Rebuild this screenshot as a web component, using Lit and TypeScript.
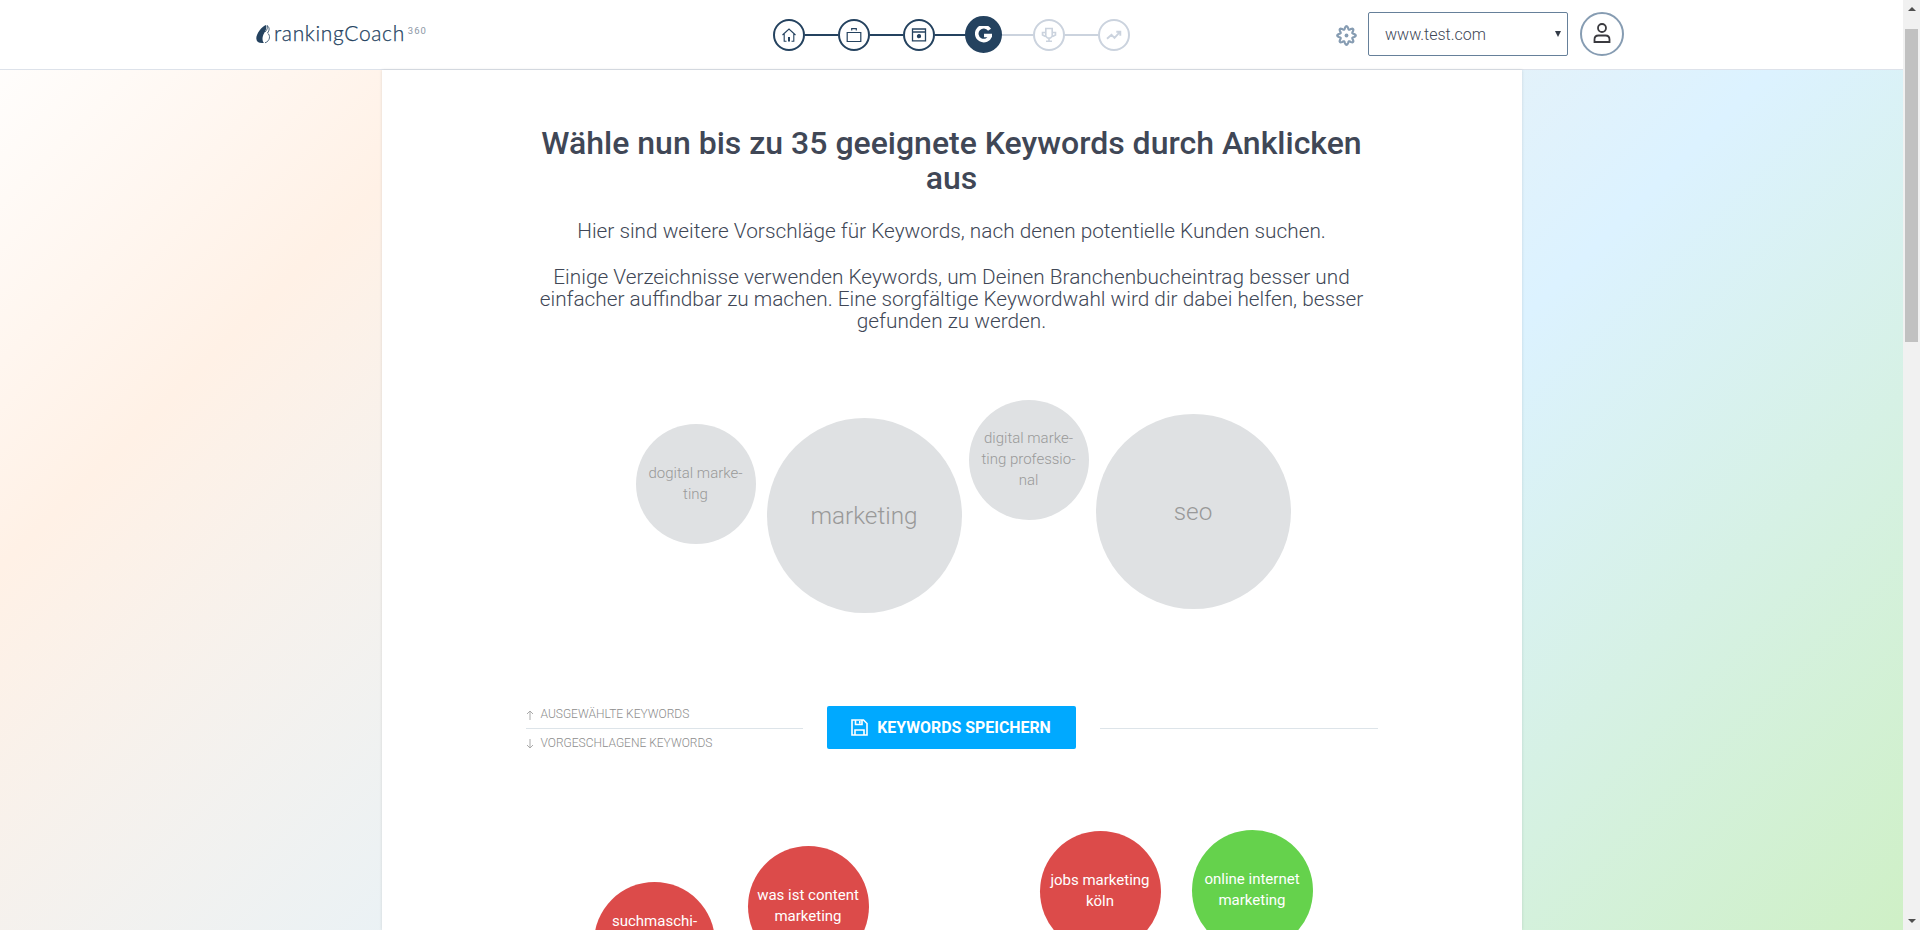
import { LitElement, html, css, svg } from "lit";
import { customElement } from "lit/decorators.js";

interface Bubble { text: string[]; x: number; y: number; d: number; kind: string; }

const selected: Bubble[] = [
  { text: ["dogital marke-", "ting"], x: 110, y: 24, d: 120, kind: "grey" },
  { text: ["marketing"], x: 241, y: 18, d: 195, kind: "grey big" },
  { text: ["digital marke-", "ting professio-", "nal"], x: 443, y: 0, d: 120, kind: "grey raised" },
  { text: ["seo"], x: 570, y: 14, d: 195, kind: "grey big" },
];
const suggested: Bubble[] = [
  { text: ["suchmaschi-", "", ""], x: 68.5, y: 52, d: 121, kind: "red" },
  { text: ["was ist content", "marketing"], x: 222, y: 16, d: 121, kind: "red raised" },
  { text: ["jobs marketing", "köln"], x: 514, y: 1, d: 121, kind: "red raised" },
  { text: ["online internet", "marketing"], x: 666, y: 0, d: 121, kind: "green raised" },
];

const icons = {
  home: svg`<path d="M1.500 8 8 2l6.500 6M3.200 7v7.300h2.300M12.800 7v7.300h-2.300"/><path d="M8 10v4.500" stroke-width="2"/>`,
  bag: svg`<path d="M1.200 5.500h13.600v9H1.200zM5.700 3.500V1.700h4.600v1.800" stroke-width="1.200"/>`,
  card: svg`<path d="M1.500 2h13v11.800h-13zM1.500 5h13" stroke-width="1.300"/><circle cx="8" cy="9.200" r="1.600" fill="currentColor"/>`,
  g: svg`<path d="M13.700 3.500A6.600 6.600 0 1 0 14.600 8.900H8.500" stroke-width="3.400"/>`,
  cup: svg`<path d="M4.800 1.500h6.400v7.700L9.500 11h-3L4.800 9.200zM4.500 5.500h-3V8l3 1.500M11.500 5.500h3V8l-3 1.500M8 11v3M5 14.300h6" stroke-width="1.600"/>`,
  trend: svg`<path d="M1 11.800 5.500 7.800l3 3 5.500-6M10.300 4.800h4v4" stroke-width="1.900"/>`,
};

/** Closed outline of a gear with eight rounded teeth, centred on (10, 10). */
function gearOutline(): string {
  const points: string[] = [];
  for (let i = 0; i < 96; i++) {
    const a = (i / 96) * Math.PI * 2;
    const r = 7.4 + 1.4 * Math.cos(8 * a);
    points.push(`${(10 + r * Math.sin(a)).toFixed(2)} ${(10 - r * Math.cos(a)).toFixed(2)}`);
  }
  return `M${points.join("L")}Z`;
}

@customElement("app-root")
export class AppRoot extends LitElement {
  static styles = css`
    :host { display: flex; width: 100%; height: 930px; overflow: hidden; font-family: Roboto, sans-serif; color: #404756; }
    * { box-sizing: border-box; }
    .page { flex: 1; display: flex; flex-direction: column; min-width: 0; background: linear-gradient(135deg, #fff 0%, #fff1e6 20%, #dcf2ff 65%, #cff0c6 100%); }
    .header { height: 70px; flex: none; background: #fff; border-bottom: 1px solid #dde2ea; display: grid; grid-template-columns: 1fr 342px 1fr; }
    .brand { display: flex; padding: 0 0 0 256px; color: #24425f; align-items: flex-start; }
    .drop { width: 15px; height: 19px; margin-top: 25px; }
    .name { font: 300 21px/24px Lato, sans-serif; margin: 21px 0 0 3px; letter-spacing: .65px; -webkit-text-stroke: .25px #24425f; }
    .sup { font-size: 9.5px; line-height: 10px; margin: 26px 0 0 3px; letter-spacing: 1px; color: #8b97a5; }
    .steps { display: flex; align-items: center; margin-left: -8px; width: 357px; color: #24425f; }
    .step { width: 32px; height: 32px; border: 2px solid #24425f; border-radius: 50%; display: grid; place-items: center; flex: none; }
    .step svg { width: 16px; height: 16px; fill: none; stroke: currentColor; stroke-width: 1.1; }
    .line { flex: 1; height: 2px; background: #24425f; }
    .line.off { background: #cbd3de; }
    .step.off { border-color: #cbd3de; color: #cbd3de; }
    .step.on { width: 37px; height: 37px; margin: 0 -2.5px; background: #24425f; color: #fff; z-index: 1; }
    .step.on svg { width: 17px; height: 17px; }
    .tools { display: flex; justify-content: flex-end; padding: 12px 279px 0 0; }
    .gear { width: 21px; height: 21px; margin: 13px 11px 0 0; }
    .select { width: 200px; height: 44px; border: 1px solid #66809a; border-radius: 2px; font-size: 16px; font-weight: 300; padding: 0 6px 0 16px; display: flex; justify-content: space-between; align-items: center; }
    .select span { padding-top: 1px; }
    .caret { border: 3px solid transparent; border-top: 6px solid #333b48; border-bottom: 0; }
    .user { width: 44px; height: 44px; border-radius: 50%; border: 2px solid #869cb2; margin-left: 12px; display: grid; place-items: center; }
    .user svg { width: 18px; height: 22px; margin-top: -2px; }
    .body { flex: 1; min-height: 0; display: flex; justify-content: center; }
    .panel { width: 1140px; background: #fff; padding: 56px 144px 0; box-shadow: 0 0 3px rgba(0,0,0,.12); overflow: hidden; }
    h1 { font-size: 32px; font-weight: 500; line-height: 35px; margin: 0; text-align: center; }
    p { font-size: 20.8px; font-weight: 300; line-height: 22px; margin: 24px 0 0; text-align: center; }
    .cloud { position: relative; height: 210px; }
    .cloud.top { margin-top: 68px; }
    .cloud.low { margin-top: 80px; }
    .bubble { position: absolute; border-radius: 50%; display: flex; flex-direction: column; justify-content: center; align-items: center; font-size: 15px; line-height: 21px; font-weight: 300; white-space: nowrap; }
    .bubble span { min-height: 21px; }
    .raised { padding-bottom: 2px; }
    .grey { background: #dfe1e3; color: #999; }
    .big { font-size: 24.3px; }
    .red { background: #dc4b4a; color: #fff; font-weight: 400; }
    .green { background: #65d24c; color: #fff; font-weight: 400; }
    .split { display: grid; grid-template-columns: 277px 249px 278px; column-gap: 24px; margin-top: 96px; height: 44px; align-items: center; }
    .rule { height: 1px; background: #dde4e9; }
    .labels { display: flex; flex-direction: column; gap: 7px; font-size: 12px; font-weight: 300; line-height: 14px; color: #8d8d8d; }
    .label { display: flex; align-items: center; }
    .label svg { width: 8px; height: 10px; margin-right: 7px; margin-top: 2px; stroke: #aaa; fill: none; }
    .save { height: 43px; align-self: start; background: #00a9ff; color: #fff; border-radius: 2px; display: flex; justify-content: center; align-items: center; font-size: 15.9px; font-weight: 700; gap: 9px; }
    .save svg { width: 17px; height: 17px; margin-top: -1px; }
    .scroll { width: 17px; background: #f1f1f1; display: flex; flex-direction: column; align-items: center; padding: 7px 0; }
    .up, .down { border: 4px solid transparent; border-bottom-color: #505050; border-top: 0; }
    .down { border-top: 4px solid #505050; border-bottom: 0; margin-top: auto; }
    .thumb { width: 13px; height: 313px; background: #c1c1c1; margin-top: 18px; }
  `;

  private cloud(list: Bubble[]) {
    return list.map(b => html`<div class="bubble ${b.kind}" style="left:${b.x}px;top:${b.y}px;width:${b.d}px;height:${b.d}px">${b.text.map(t => html`<span>${t}</span>`)}</div>`);
  }
  private step(icon: unknown, cls = "") {
    return html`<div class="step ${cls}"><svg viewBox="0 0 16 16">${icon}</svg></div>`;
  }

  render() {
    return html`
      <div class="page">
        <header class="header">
          <div class="brand">
            <svg class="drop" viewBox="0 0 15 19"><path d="M10 0C6 1 0 9 .3 13.500.5 17 3 18.500 8 18 6 16 6 12 8 8.500 9.500 6 11 3 10 0z" fill="#24425f"/><path d="M11 .5c3 2 2.500 5 .5 7.500 3 2 3 8-2.500 9.800M9 7c2-2 3-4 2-6.500" fill="none" stroke="#24425f" stroke-width=".8"/></svg>
            <span class="name">rankingCoach</span><span class="sup">360</span>
          </div>
          <div class="steps">
            ${this.step(icons.home)}<i class="line"></i>${this.step(icons.bag)}<i class="line"></i>${this.step(icons.card)}<i class="line"></i>${this.step(icons.g, "on")}<i class="line off"></i>${this.step(icons.cup, "off")}<i class="line off"></i>${this.step(icons.trend, "off")}
          </div>
          <div class="tools">
            <svg class="gear" viewBox="0 0 20 20" fill="none" stroke="#869cb2" stroke-width="2.100"><path d=${gearOutline()} /><circle cx="10" cy="10" r="1.800" fill="#869cb2" stroke="none"/></svg>
            <div class="select"><span>www.test.com</span><i class="caret"></i></div>
            <div class="user"><svg viewBox="0 0 18 22" fill="none" stroke="#3a3a3f" stroke-width="1.800"><circle cx="9" cy="6" r="4"/><path d="M1.500 20v-2.500q0-4 4-4h7q4 0 4 4V20z"/></svg></div>
          </div>
        </header>
        <main class="body">
          <section class="panel">
            <h1>Wähle nun bis zu 35 geeignete Keywords durch Anklicken aus</h1>
            <p>Hier sind weitere Vorschläge für Keywords, nach denen potentielle Kunden suchen.</p>
            <p>Einige Verzeichnisse verwenden Keywords, um Deinen Branchenbucheintrag besser und einfacher auffindbar zu machen. Eine sorgfältige Keywordwahl wird dir dabei helfen, besser gefunden zu werden.</p>
            <div class="cloud top">${this.cloud(selected)}</div>
            <div class="split">
              <div class="labels">
                <div class="label"><svg viewBox="0 0 8 10"><path d="M4 10V1M1 4l3-3 3 3"/></svg>AUSGEWÄHLTE KEYWORDS</div>
                <div class="rule"></div>
                <div class="label"><svg viewBox="0 0 8 10"><path d="M4 0v9M1 6l3 3 3-3"/></svg>VORGESCHLAGENE KEYWORDS</div>
              </div>
              <div class="save"><svg viewBox="0 0 17 17" fill="none" stroke="#fff" stroke-width="1.600"><path d="M1 1h11.500L16 4.500V16H1zM4 16v-5h9v5M4.500 1v4.500h6.500V1M8.800 2v2.500"/></svg>KEYWORDS SPEICHERN</div>
              <div class="rule"></div>
            </div>
            <div class="cloud low">${this.cloud(suggested)}</div>
          </section>
        </main>
      </div>
      <div class="scroll"><i class="up"></i><i class="thumb"></i><i class="down"></i></div>
    `;
  }
}
